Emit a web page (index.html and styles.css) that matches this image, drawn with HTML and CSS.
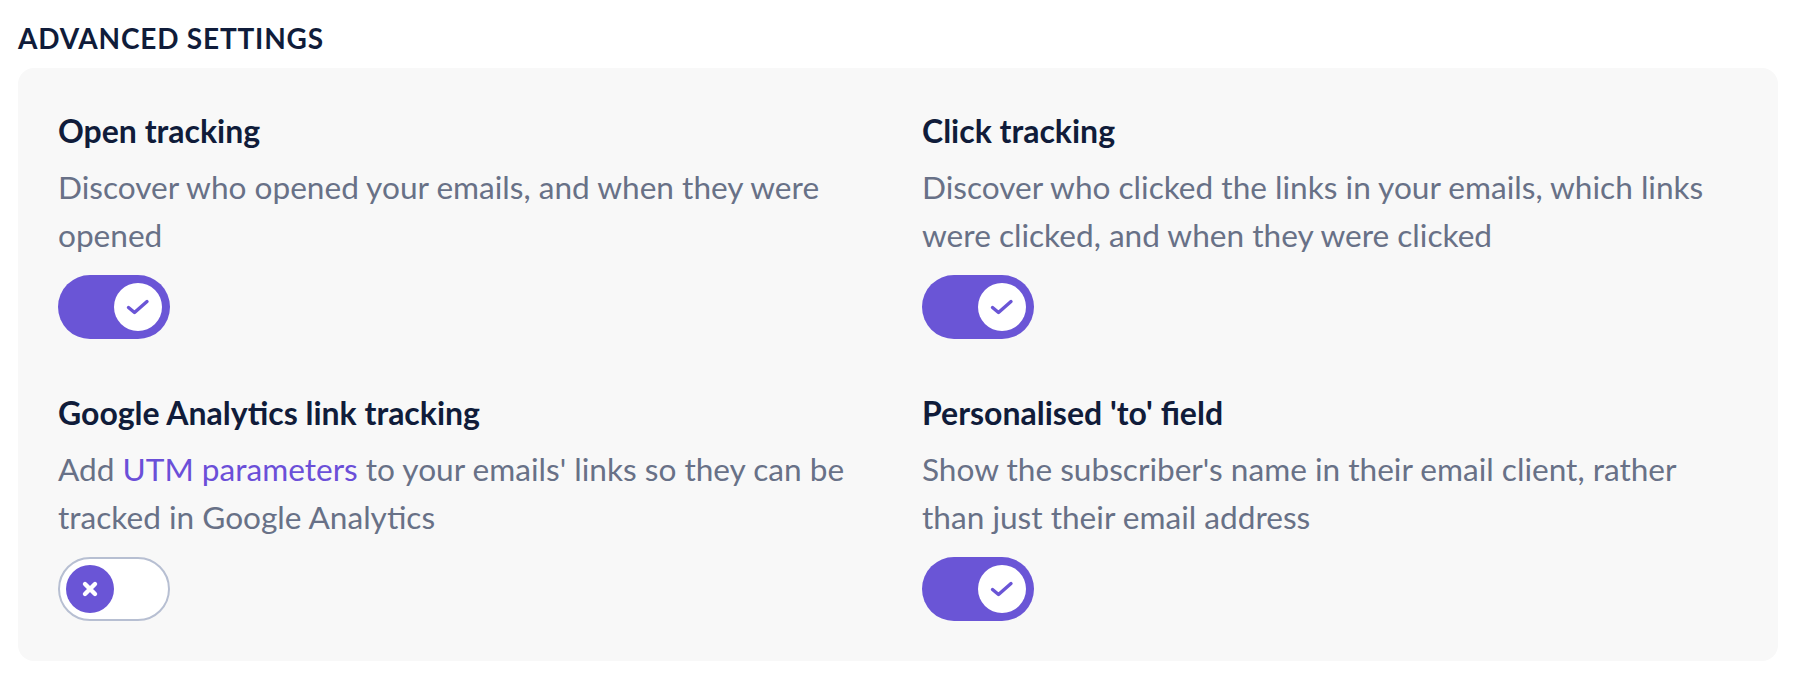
FILE: index.html
```html
<!DOCTYPE html>
<html lang="en">
<head>
<meta charset="utf-8">
<title>Advanced settings</title>
<link rel="stylesheet" href="styles.css">
</head>
<body>
<main class="page">
  <h2 class="section-title">ADVANCED SETTINGS</h2>
  <section class="card">
    <div class="setting">
      <h3 class="setting-title">Open tracking</h3>
      <p class="setting-desc">Discover who opened your emails, and when they were opened</p>
      <span class="toggle toggle-on" role="switch" aria-checked="true">
        <span class="knob"><svg class="icon-check" viewBox="0 0 28 28"><path d="M4.5 14.5L10.5 19.5L23 8.5" fill="none" stroke="#6a55d6" stroke-width="3.4" stroke-linecap="round" stroke-linejoin="round"/></svg></span>
      </span>
    </div>
    <div class="setting">
      <h3 class="setting-title">Click tracking</h3>
      <p class="setting-desc">Discover who clicked the links in your emails, which links were clicked, and when they were clicked</p>
      <span class="toggle toggle-on" role="switch" aria-checked="true">
        <span class="knob"><svg class="icon-check" viewBox="0 0 28 28"><path d="M4.5 14.5L10.5 19.5L23 8.5" fill="none" stroke="#6a55d6" stroke-width="3.4" stroke-linecap="round" stroke-linejoin="round"/></svg></span>
      </span>
    </div>
    <div class="setting">
      <h3 class="setting-title">Google Analytics link tracking</h3>
      <p class="setting-desc"><span>Add </span><a class="link" href="#">UTM parameters</a><span> to your emails' links so they can be tracked in Google Analytics</span></p>
      <span class="toggle toggle-off" role="switch" aria-checked="false">
        <span class="knob"><svg class="icon-x" viewBox="0 0 20 20"><path d="M5 5L15 15M15 5L5 15" fill="none" stroke="#ffffff" stroke-width="4.4" stroke-linecap="round"/></svg></span>
      </span>
    </div>
    <div class="setting">
      <h3 class="setting-title">Personalised 'to' field</h3>
      <p class="setting-desc">Show the subscriber's name in their email client, rather than just their email address</p>
      <span class="toggle toggle-on" role="switch" aria-checked="true">
        <span class="knob"><svg class="icon-check" viewBox="0 0 28 28"><path d="M4.5 14.5L10.5 19.5L23 8.5" fill="none" stroke="#6a55d6" stroke-width="3.4" stroke-linecap="round" stroke-linejoin="round"/></svg></span>
      </span>
    </div>
  </section>
</main>
</body>
</html>
```

FILE: styles.css
```css
* { box-sizing: border-box; }

html, body {
  margin: 0;
  padding: 0;
  background: #ffffff;
}

body {
  font-family: Lato, "Open Sans", "Liberation Sans", sans-serif;
  color: #101c3a;
}

.page {
  padding: 18px 26px 0 18px;
}

.section-title {
  margin: 0 0 10px 0;
  font-size: 28px;
  line-height: 40px;
  font-weight: 700;
  color: #101c3a;
  letter-spacing: 0.8px;
}

.card {
  background: #f8f8f8;
  border-radius: 16px;
  padding: 39px 40px 40px 40px;
  display: grid;
  grid-template-columns: 1fr 1fr;
  column-gap: 48px;
  row-gap: 50px;
}

.setting {
  display: flex;
  flex-direction: column;
  align-items: flex-start;
}

.setting-title {
  margin: 0 0 8px 0;
  font-size: 32px;
  line-height: 48px;
  font-weight: 700;
  color: #101c3a;
}

.setting-desc {
  margin: 0 0 16px 0;
  font-size: 31.6px;
  line-height: 48px;
  font-weight: 400;
  color: #687187;
}

.link {
  color: #6b4fd8;
  text-decoration: none;
}

.toggle {
  width: 112px;
  height: 64px;
  border-radius: 32px;
  display: flex;
  align-items: center;
  padding: 0 8px;
}

.toggle-on {
  background: #6a55d6;
  justify-content: flex-end;
}

.toggle-off {
  background: #ffffff;
  border: 2px solid #b7bfd2;
  padding: 0 6px;
  justify-content: flex-start;
}

.knob {
  width: 48px;
  height: 48px;
  border-radius: 50%;
  display: flex;
  align-items: center;
  justify-content: center;
}

.toggle-on .knob {
  background: #ffffff;
}

.toggle-off .knob {
  background: #6a55d6;
}

.icon-check {
  width: 28px;
  height: 28px;
}

.icon-x {
  width: 20px;
  height: 20px;
}
```
